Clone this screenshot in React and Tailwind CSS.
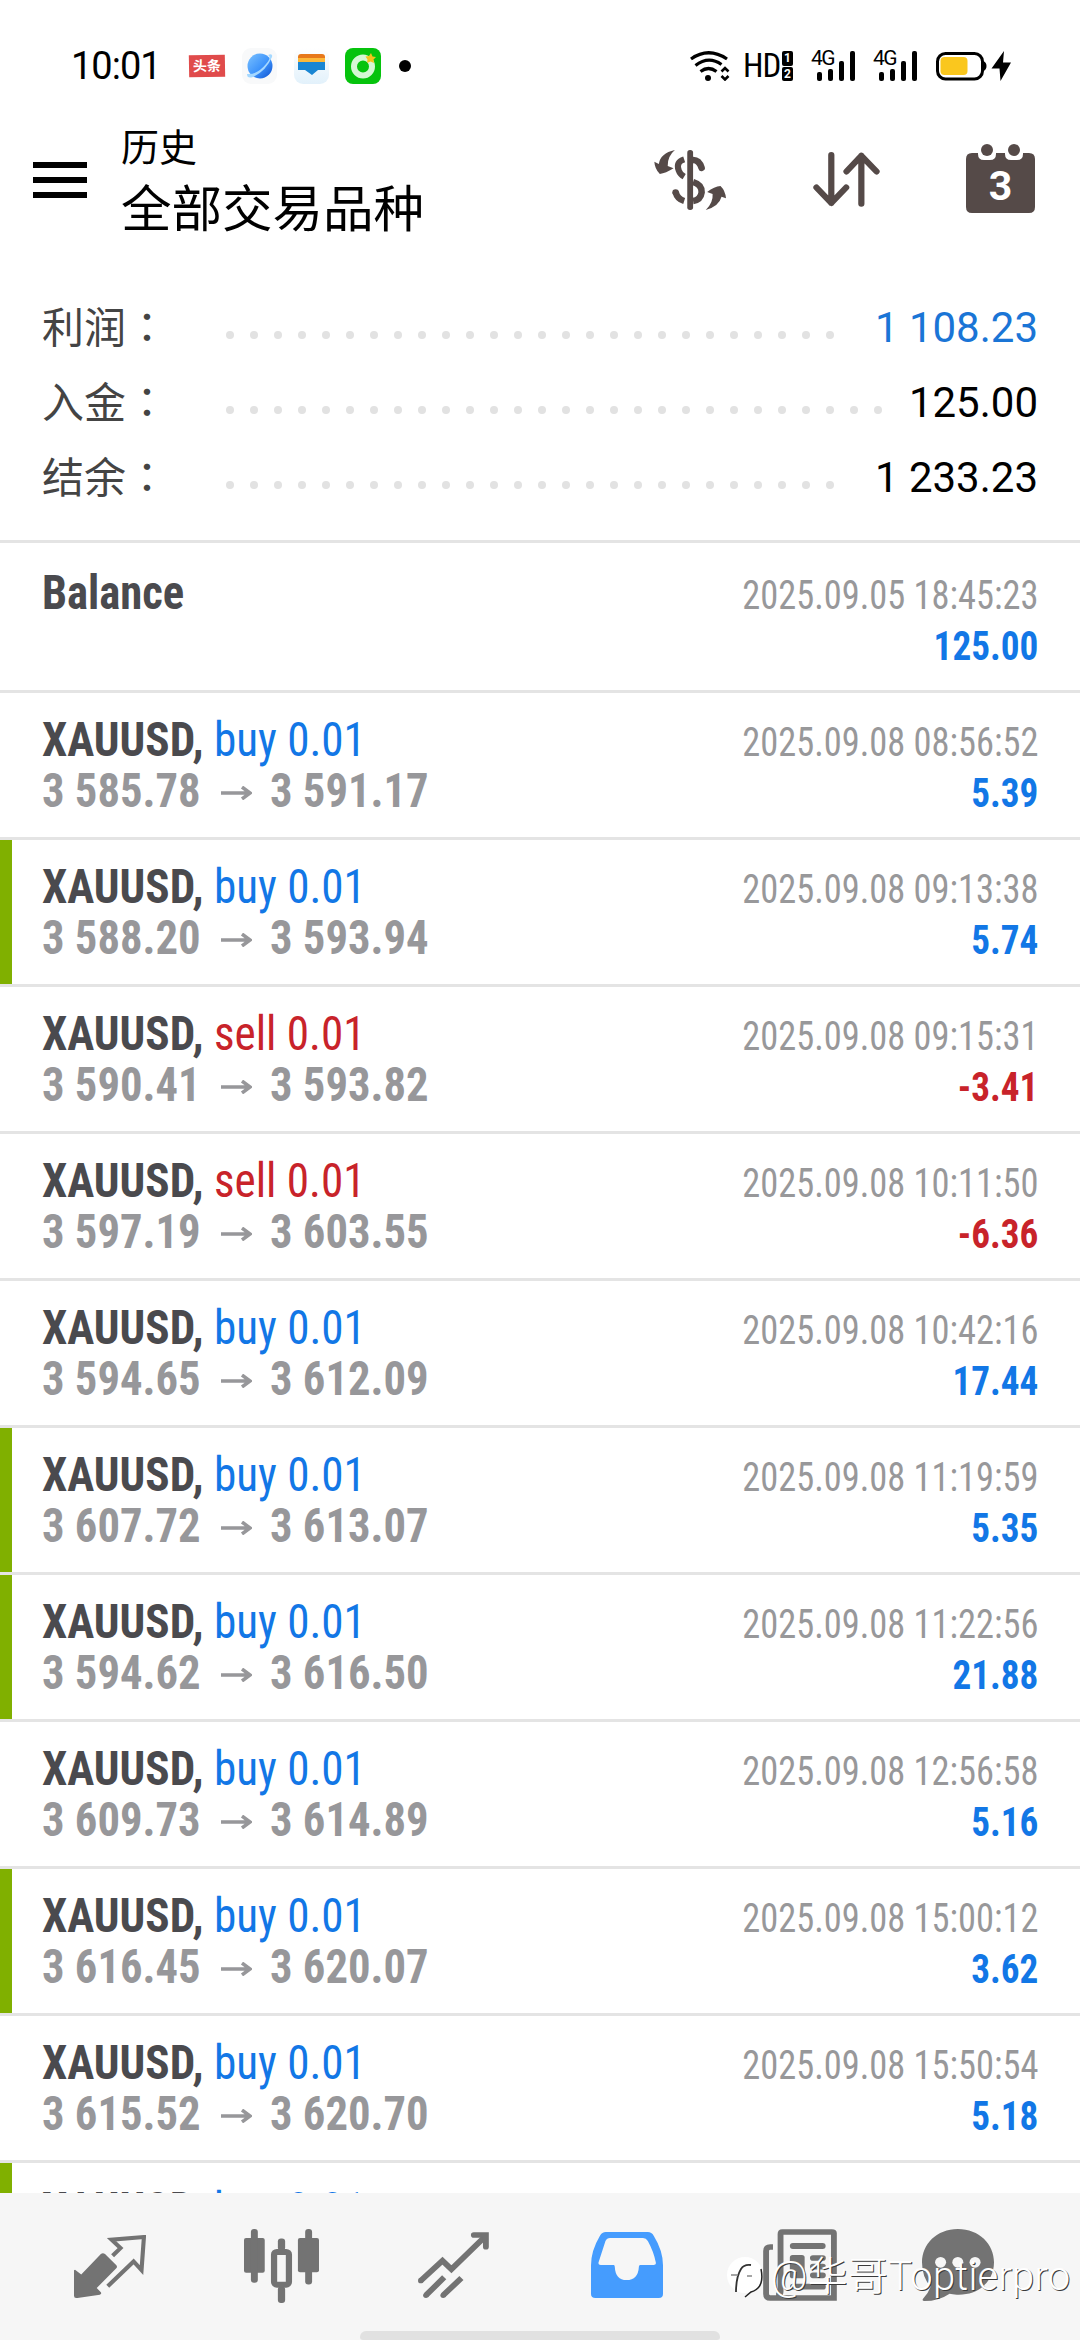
import clsx from "clsx";

const summary = [
  { label: "利润", value: "1 108.23", dots: 26, color: "text-[#1a75d6]" },
  { label: "入金", value: "125.00", dots: 28, color: "text-black" },
  { label: "结余", value: "1 233.23", dots: 26, color: "text-black" },
];

const deals = [
  { side: "buy", open: "3 585.78", close: "3 591.17", time: "2025.09.08 08:56:52", profit: "5.39" },
  { side: "buy", open: "3 588.20", close: "3 593.94", time: "2025.09.08 09:13:38", profit: "5.74", tp: true },
  { side: "sell", open: "3 590.41", close: "3 593.82", time: "2025.09.08 09:15:31", profit: "-3.41" },
  { side: "sell", open: "3 597.19", close: "3 603.55", time: "2025.09.08 10:11:50", profit: "-6.36" },
  { side: "buy", open: "3 594.65", close: "3 612.09", time: "2025.09.08 10:42:16", profit: "17.44" },
  { side: "buy", open: "3 607.72", close: "3 613.07", time: "2025.09.08 11:19:59", profit: "5.35", tp: true },
  { side: "buy", open: "3 594.62", close: "3 616.50", time: "2025.09.08 11:22:56", profit: "21.88", tp: true },
  { side: "buy", open: "3 609.73", close: "3 614.89", time: "2025.09.08 12:56:58", profit: "5.16" },
  { side: "buy", open: "3 616.45", close: "3 620.07", time: "2025.09.08 15:00:12", profit: "3.62", tp: true },
  { side: "buy", open: "3 615.52", close: "3 620.70", time: "2025.09.08 15:50:54", profit: "5.18" },
];

function Signal() {
  return (
    <div className="relative w-[45px] h-[30px]">
      <span className="absolute -left-[5px] -top-[3px] text-[21px] leading-[21px] tracking-[-1.5px]">4G</span>
      <svg className="w-[45px] h-[30px]" viewBox="0 0 45 30">
        <rect x="1" y="21" width="5" height="9" rx="2" />
        <rect x="12" y="18" width="5" height="12" rx="2" />
        <rect x="23" y="10" width="5" height="20" rx="2" />
        <rect x="34" y="0" width="5" height="30" rx="2" />
      </svg>
    </div>
  );
}

function StatusBar() {
  return (
    <div className="flex items-center h-[132px] pl-[71px] font-['Roboto',sans-serif] text-black">
      <span className="w-[118px] text-[38px] leading-[38px] tracking-[-1px]">10:01</span>
      <div className="w-[36px] h-[22px] bg-[#e04b4b] text-white text-[14px] leading-[21px] font-bold text-center font-['Noto_Sans_CJK_SC',sans-serif] -rotate-1">头条</div>
      <svg className="ml-[17px] w-[35px] h-[36px]" viewBox="0 0 35 36">
        <defs>
          <linearGradient id="planet" x1="0" y1="0" x2="1" y2="1">
            <stop offset="0" stopColor="#7cc2ff" />
            <stop offset="0.55" stopColor="#3d93fb" />
            <stop offset="1" stopColor="#0d50cf" />
          </linearGradient>
        </defs>
        <rect width="35" height="36" rx="9" fill="#f8f9fa" />
        <circle cx="18" cy="18" r="12.5" fill="url(#planet)" />
        <path d="M5 26Q5 31 11 29Q24 23 30 9Q31 5 26 7Q30 9 24 16Q15 27 5 26z" fill="#a5d8ff" />
      </svg>
      <svg className="ml-[17px] w-[35px] h-[36px]" viewBox="0 0 35 36">
        <defs>
          <linearGradient id="pocket" x1="0" y1="0" x2="0" y2="1">
            <stop offset="0" stopColor="#ffffff" />
            <stop offset="1" stopColor="#e2f1fb" />
          </linearGradient>
        </defs>
        <rect width="35" height="36" rx="9" fill="url(#pocket)" />
        <path d="M4 9a3 3 0 0 1 3-3h21a3 3 0 0 1 3 3v4H4z" fill="#e7791b" />
        <path d="M4 10h27v5H4z" fill="#fcb83a" />
        <path d="M4 14h27v8h-7l-6 5-7-5H4z" fill="#1a86d3" />
      </svg>
      <svg className="ml-[16px] w-[36px] h-[36px]" viewBox="0 0 36 36">
        <rect width="36" height="36" rx="8" fill="#06c30d" />
        <circle cx="18" cy="18.5" r="9" fill="none" stroke="#d5f7d4" strokeWidth="6" />
        <path d="M26 5l1.500 3.500 3.500.5-2.500 2.500.5 3.500-3.500-1.500-3.500 1.500.5-3.500-2-3 3.500-.5z" fill="#f3c31c" />
      </svg>
      <span className="ml-[18px] w-3 h-3 rounded-full bg-black" />

      <svg className="ml-[279px] w-[40px] h-[30px]" viewBox="0 0 40 30" fill="none" stroke="#000" strokeWidth="3.200">
        <path d="M1 8Q18.500-4.500 37 8M5.500 14.500Q18.500 4.500 31.500 13.500M10.500 20.500Q18.500 14.500 26.500 20.500" />
        <path d="M31.500 20.500l3.500-3.500 3.500 3.500M31.500 25l3.500 3.500 3.500-3.500" strokeWidth="2.600" />
        <circle cx="18" cy="27" r="3" fill="#000" stroke="none" />
      </svg>
      <span className="ml-[13px] w-[39px] text-[33px] leading-[30px] tracking-[-1px] font-['Roboto_Condensed','Roboto',sans-serif]">HD</span>
      <div className="w-[11px] h-[30px] flex flex-col gap-px text-white text-[12px] leading-[14.500px] font-bold text-center">
        <span className="bg-black h-[14.500px] rounded-[2px]">1</span>
        <span className="bg-black h-[14.500px] rounded-[2px]">2</span>
      </div>
      <div className="ml-[23px] flex gap-[17px]">
        <Signal />
        <Signal />
      </div>
      <svg className="ml-[13px] w-[76px] h-[30px]" viewBox="0 0 76 30">
        <rect x="1.500" y="2.500" width="45" height="25.500" rx="8" fill="none" stroke="#000" strokeWidth="3" />
        <path d="M47.500 10q3 1.500 3 5t-3 5z" />
        <rect x="4.500" y="6" width="27" height="18" rx="4" fill="#fac71e" />
        <path d="M68 0L55.500 17.500h8L64.500 30l10.500-18.500h-8z" />
      </svg>
    </div>
  );
}

function Header() {
  return (
    <header className="flex items-start h-[144px] pl-[33px] text-black">
      <div className="mt-[30px] w-[54px] flex flex-col gap-[9px]">
        <span className="h-[6px] bg-black" />
        <span className="h-[6px] bg-black" />
        <span className="h-[6px] bg-black" />
      </div>
      <div className="ml-[34px] -mt-[7px] w-[533px] font-['Noto_Sans_CJK_SC',sans-serif]">
        <div className="text-[38px] leading-[40px]">历史</div>
        <div className="mt-[10px] text-[50.500px] leading-[60px]">全部交易品种</div>
      </div>
      <svg className="mt-[18px] w-[72px] h-[60px]" viewBox="330 360 210 180" preserveAspectRatio="none" fill="#554a48">
        <rect x="427" y="360" width="17" height="180" rx="8" />
        <path d="M418 388Q393 396 402 421Q406 433 418 440" fill="none" stroke="#554a48" strokeWidth="18" />
        <path d="M444 390Q462 390 469 414" fill="none" stroke="#554a48" strokeWidth="19" strokeLinecap="round" />
        <path d="M444 456Q470 464 469 487Q466 510 444 513" fill="none" stroke="#554a48" strokeWidth="19" />
        <path d="M393 486Q398 507 418 513" fill="none" stroke="#554a48" strokeWidth="19" />
        <circle cx="393" cy="487" r="9.5" />
        <path d="M391 360Q348 370 344 402L331 395Q332 416 347 432Q364 430 387 415L370 408Q369 379 391 360z" />
        <path d="M481 540Q520 528 527 500L540 505Q538 482 524 468Q506 469 485 486L501 492Q503 518 481 540z" />
      </svg>
      <svg className="mt-[20px] ml-[87px] w-[67px] h-[55px]" viewBox="792 368 194 164" preserveAspectRatio="none" fill="none" stroke="#554a48" strokeWidth="18" strokeLinecap="round" strokeLinejoin="round">
        <path d="M845 377V520M802 474L845 520L888 474" />
        <path d="M932 522V379M889 426L932 379L976 426" />
      </svg>
      <div className="relative mt-[12px] ml-[86px] w-[69px] h-[69px]">
        <svg className="w-[69px] h-[69px]" viewBox="0 0 69 69" fill="#554a48">
          <path d="M6 9h6v1q0 6 6 6h6q6 0 6-6V9h9v1q0 6 6 6h6q6 0 6-6V9h6q6 0 6 6v48q0 6-6 6H6q-6 0-6-6V15q0-6 6-6z" />
          <circle cx="21" cy="6" r="6" />
          <circle cx="48" cy="6" r="6" />
        </svg>
        <span className="absolute inset-x-0 top-[22px] text-center text-white text-[41px] leading-[41px] font-bold font-['Roboto',sans-serif]">3</span>
      </div>
    </header>
  );
}

function Summary() {
  return (
    <section className="flex flex-col pt-[14px] h-[267px] border-b-[3px] border-[#e4e4e4]">
      {summary.map((s) => (
        <div key={s.label} className="flex items-center h-[75px] pl-[42px] pr-[42px]">
          <div className="-mt-[5px] w-[184px] text-[42px] leading-[75px] text-[#444]">
            <span className="font-['Noto_Sans_CJK_SC',sans-serif]">{s.label}</span>
            <span className="font-['Noto_Sans_CJK_TC',sans-serif]" lang="zh-TW">：</span>
          </div>
          <div className="flex gap-4 mt-[15px]">
            {Array.from({ length: s.dots }, (_, i) => (
              <span key={i} className="w-2 h-2 rounded-full bg-[#e2e2e2]" />
            ))}
          </div>
          <span className={clsx("ml-auto text-[42px] leading-[75px] font-['Roboto',sans-serif]", s.color)}>{s.value}</span>
        </div>
      ))}
    </section>
  );
}

function Deal({ side, open, close, time, profit, tp }) {
  return (
    <div className="relative flex justify-between h-[147px] shrink-0 pl-[42px] pr-[42px] border-b-[3px] border-[#e4e4e4]">
      {tp && <span className="absolute left-0 top-0 w-3 h-[144px] bg-[#80b000]" />}
      <div className="pt-[21px] text-[48px] leading-[51px]">
        <div className="origin-left scale-x-[0.94]">
          <span className="font-bold text-[#4a4a4e]">XAUUSD, </span>
          <span className={side === "buy" ? "text-[#1277e6]" : "text-[#c8232a]"}>{side} 0.01</span>
        </div>
        {open && (
          <div className="flex font-bold text-[#97979a]">
            <span className="w-[179px] origin-left scale-x-[0.93]">{open}</span>
            <svg className="mt-[21px] mr-[18px] w-[31px] h-[14px] shrink-0" viewBox="0 0 31 14" fill="none" stroke="currentColor" strokeWidth="3.500">
              <path d="M0 7h28M21 1l8 6-8 6" />
            </svg>
            <span className="origin-left scale-x-[0.93]">{close}</span>
          </div>
        )}
      </div>
      {time && <Result time={time} profit={profit} className="pt-6" />}
    </div>
  );
}

function Result({ time, profit, className }) {
  return (
    <div className={clsx("text-right text-[40px] leading-[51px]", className)}>
      <div className="origin-right scale-x-[0.91] text-[#98989a]">{time}</div>
      <div className={clsx("origin-right scale-x-[0.93] font-bold", profit.startsWith("-") ? "text-[#c8232a]" : "text-[#1277e6]")}>{profit}</div>
    </div>
  );
}

function TabBar() {
  return (
    <nav className="relative flex items-start h-[147px] shrink-0 bg-[#f6f6f6] text-[#737373]">
      <svg className="mt-[42px] ml-[74px] w-[72px] h-[63px]" viewBox="215 345 209 188" preserveAspectRatio="none">
        <path d="M218 449L236 463L293 402Q299 397 305 402L338 435Q342 440 337 445L281 503L293 516Q296 521 290 523L225 533Q215 534 215 526V450z" fill="currentColor" />
        <path d="M327 407L350 384L324 359L418 351L411 450L388 424L313 498" fill="none" stroke="currentColor" strokeWidth="12" />
      </svg>
      <svg className="mt-[36px] ml-[98px] w-[75px] h-[74px]" viewBox="709 327 217 223" preserveAspectRatio="none" fill="currentColor">
        <rect x="709" y="354" width="60" height="105" rx="6" />
        <rect x="729" y="327" width="20" height="162" rx="9" />
        <rect x="865" y="354" width="61" height="103" rx="6" />
        <rect x="886" y="327" width="20" height="167" rx="9" />
        <rect x="807" y="356" width="21" height="36" rx="9" />
        <rect x="807" y="500" width="21" height="50" rx="9" />
        <rect x="796" y="396" width="43" height="99" rx="8" fill="none" stroke="currentColor" strokeWidth="18" />
      </svg>
      <svg className="mt-[39px] ml-[99px] w-[71px] h-[66px]" viewBox="1214 336 206 198" preserveAspectRatio="none" fill="none" stroke="currentColor" strokeWidth="17">
        <path d="M1221 483L1285 422L1311 448L1408 350" />
        <path d="M1376 345H1411V380" strokeLinecap="round" />
        <path d="M1290 472L1237 526M1340 474L1287 526" />
        <circle cx="1222" cy="482" r="8" fill="currentColor" stroke="none" />
        <circle cx="1237" cy="526" r="8" fill="currentColor" stroke="none" />
        <circle cx="1287" cy="526" r="8" fill="currentColor" stroke="none" />
      </svg>
      <svg className="mt-[39px] ml-[102px] w-[72px] h-[66px]" viewBox="147 336 209 198" preserveAspectRatio="none">
        <path fillRule="evenodd" fill="#459cfe" d="M190 336H312Q323 336 329 347Q356 392 356 436V522Q356 534 344 534H160Q147 534 147 522V436Q147 392 173 347Q179 336 190 336zM202 354Q193 354 189 363L169 427Q167 435 175 435H213Q216 436 216 440Q218 480 250 480Q284 480 286 440Q286 436 290 435H329Q337 435 335 427Q329 395 312 363Q307 354 298 354z" />
      </svg>
      <svg className="mt-[36px] ml-[100px] w-[74px] h-[72px]" viewBox="648 327 215 216" preserveAspectRatio="none" fill="none" stroke="currentColor" strokeWidth="17">
        <path d="M677 381H669Q657 381 657 393V522Q657 534 669 534H854V340Q854 336 848 336H704Q699 336 699 342V515Q699 526 686 526" />
        <path d="M735 378H821" strokeWidth="18" strokeLinecap="round" />
        <rect x="726" y="405" width="43" height="70" rx="8" fill="currentColor" stroke="none" />
        <path d="M793 414H822M793 440H822M793 466H822" strokeLinecap="round" />
        <path d="M735 500H822" strokeLinecap="round" />
      </svg>
      <svg className="mt-[36px] ml-[85px] w-[72px] h-[72px]" viewBox="1109 327 209 216" preserveAspectRatio="none">
        <path d="M1213 327C1275 327 1318 372 1318 427C1318 485 1272 527 1210 524Q1197 523 1189 521Q1158 543 1116 543Q1108 543 1112 536Q1128 518 1134 500Q1109 472 1109 427C1109 372 1152 327 1213 327z" fill="currentColor" />
        <circle cx="1163" cy="427" r="16" fill="#f6f6f6" />
        <circle cx="1213" cy="427" r="16" fill="#f6f6f6" />
        <circle cx="1263" cy="427" r="16" fill="#f6f6f6" />
      </svg>
      <span className="absolute left-[360px] bottom-0 w-[360px] h-[9px] rounded-t-[6px] rounded-b-[3px] bg-[#e1e1e1]" />
      <div className="absolute left-[727px] top-[59px] flex items-center text-white whitespace-nowrap">
        <svg className="w-[40px] h-[44px]" viewBox="0 0 40 44">
          <circle cx="18" cy="20" r="18" fill="#fff" />
          <path d="M34 14Q38 33 24 37l-6 5" fill="none" stroke="#222" strokeWidth="1.500" />
          <path d="M9 37Q9 22 14 14Q17 9 24 10" fill="none" stroke="#333" strokeWidth="1.800" />
          <path d="M4 20h7M20 21h5" fill="none" stroke="#888" strokeWidth="1.500" />
        </svg>
        <span className="ml-[4px] text-[40px] leading-[50px] tracking-[0.2px] font-['Roboto','Noto_Sans_CJK_SC',sans-serif] font-light [text-shadow:1px_1px_0_#3a3a3a]">@华哥Toptierpro</span>
      </div>
    </nav>
  );
}

export default function App() {
  return (
    <div className="w-[1080px] h-[2340px] flex flex-col overflow-hidden bg-white">
      <StatusBar />
      <Header />
      <Summary />
      <main className="flex-1 min-h-0 flex flex-col overflow-hidden font-['Roboto_Condensed','Roboto',sans-serif] [font-stretch:75%]">
        <div className="flex justify-between h-[150px] shrink-0 pl-[42px] pr-[42px] border-b-[3px] border-[#e4e4e4]">
          <div className="pt-6 text-[48px] leading-[51px] font-bold text-[#4a4a4e] origin-left scale-x-[0.93]">Balance</div>
          <Result time="2025.09.05 18:45:23" profit="125.00" className="pt-[27px]" />
        </div>
        {deals.map((d) => (
          <Deal key={d.time} {...d} />
        ))}
        <Deal side="buy" tp />
      </main>
      <TabBar />
    </div>
  );
}
